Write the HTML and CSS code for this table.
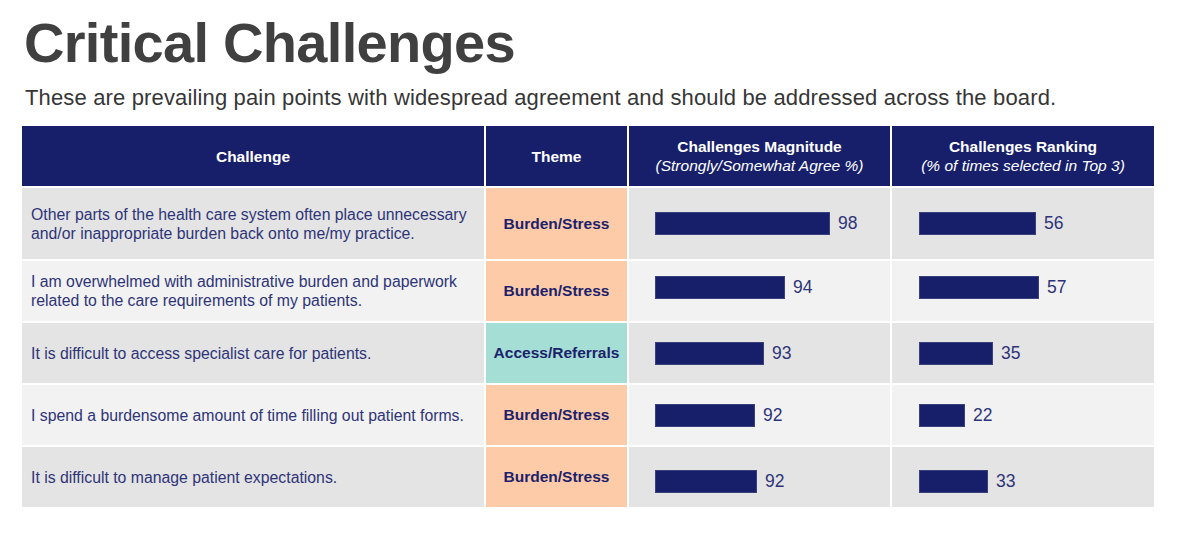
FILE: index.html
```html
<!DOCTYPE html>
<html lang="en">
<head>
<meta charset="utf-8">
<title>Critical Challenges</title>
<link rel="stylesheet" href="styles.css">
</head>
<body>
<main class="slide">
  <h1 class="title">Critical Challenges</h1>
  <p class="subtitle">These are prevailing pain points with widespread agreement and should be addressed across the board.</p>
  <div class="table">
    <div class="th">Challenge</div>
    <div class="th">Theme</div>
    <div class="th"><span>Challenges Magnitude</span><em>(Strongly/Somewhat Agree %)</em></div>
    <div class="th"><span>Challenges Ranking</span><em>(% of times selected in Top 3)</em></div>

    <div class="td text dark">Other parts of the health care system often place unnecessary and/or inappropriate burden back onto me/my practice.</div>
    <div class="td theme burden">Burden/Stress</div>
    <div class="td bars dark mag"><i class="bar" style="width:175px"></i><b class="val">98</b></div>
    <div class="td bars dark rank"><i class="bar" style="width:117px"></i><b class="val">56</b></div>

    <div class="td text light">I am overwhelmed with administrative burden and paperwork related to the care requirements of my patients.</div>
    <div class="td theme burden">Burden/Stress</div>
    <div class="td bars light mag up"><i class="bar" style="width:130px"></i><b class="val">94</b></div>
    <div class="td bars light rank up"><i class="bar" style="width:120px"></i><b class="val">57</b></div>

    <div class="td text dark">It is difficult to access specialist care for patients.</div>
    <div class="td theme access">Access/Referrals</div>
    <div class="td bars dark mag"><i class="bar" style="width:109px"></i><b class="val">93</b></div>
    <div class="td bars dark rank"><i class="bar" style="width:74px"></i><b class="val">35</b></div>

    <div class="td text light">I spend a burdensome amount of time filling out patient forms.</div>
    <div class="td theme burden">Burden/Stress</div>
    <div class="td bars light mag"><i class="bar" style="width:100px"></i><b class="val">92</b></div>
    <div class="td bars light rank"><i class="bar" style="width:46px"></i><b class="val">22</b></div>

    <div class="td text dark">It is difficult to manage patient expectations.</div>
    <div class="td theme burden">Burden/Stress</div>
    <div class="td bars dark mag down"><i class="bar" style="width:102px"></i><b class="val">92</b></div>
    <div class="td bars dark rank down"><i class="bar" style="width:69px"></i><b class="val">33</b></div>
  </div>
</main>
</body>
</html>
```
FILE: styles.css
```css
* { box-sizing: border-box; }
html, body {
  margin: 0;
  padding: 0;
  background: #ffffff;
}
body {
  font-family: "Liberation Sans", Arial, sans-serif;
}
.slide {
  display: flex;
  flex-direction: column;
  align-items: flex-start;
  padding-left: 22px;
}
.title {
  margin: 14px 0 0 2px;
  font-size: 56px;
  line-height: 57px;
  font-weight: 700;
  color: #404040;
  letter-spacing: -0.7px;
}
.subtitle {
  margin: 15px 0 0 3px;
  font-size: 22px;
  line-height: 24px;
  color: #363636;
  letter-spacing: 0.15px;
}
.table {
  margin-top: 16px;
  display: grid;
  grid-template-columns: 462px 141px 261px 262px;
  grid-template-rows: 60px 71px 60px 60px 60px 60px;
  gap: 2px;
}
.th {
  background: #171f6b;
  color: #ffffff;
  display: flex;
  flex-direction: column;
  align-items: center;
  justify-content: center;
  text-align: center;
  font-size: 15.5px;
  font-weight: 700;
  line-height: 19px;
}
.th em {
  font-weight: 400;
  font-size: 15.5px;
  line-height: 19px;
}
.td {
  display: flex;
  align-items: center;
}
.dark { background: #e4e4e4; }
.light { background: #f2f2f2; }
.text {
  padding: 0 8px 0 9px;
  color: #2e3478;
  font-size: 15.8px;
  line-height: 19px;
}
.theme {
  justify-content: center;
  font-size: 15.5px;
  font-weight: 700;
  color: #1b226b;
}
.burden { background: #fecba9; }
.access { background: #a5ded5; }
.bars.mag { padding-left: 26px; }
.bars.rank { padding-left: 27px; }
.bars.up { padding-bottom: 8px; }
.bars.down { padding-top: 8px; }
.bar {
  display: block;
  height: 23px;
  background: #171f6b;
  box-shadow: inset 0 0 0 1px #3a407c;
}
.val {
  margin-left: 8px;
  font-weight: 400;
  font-size: 17.5px;
  color: #2e3478;
}
```
